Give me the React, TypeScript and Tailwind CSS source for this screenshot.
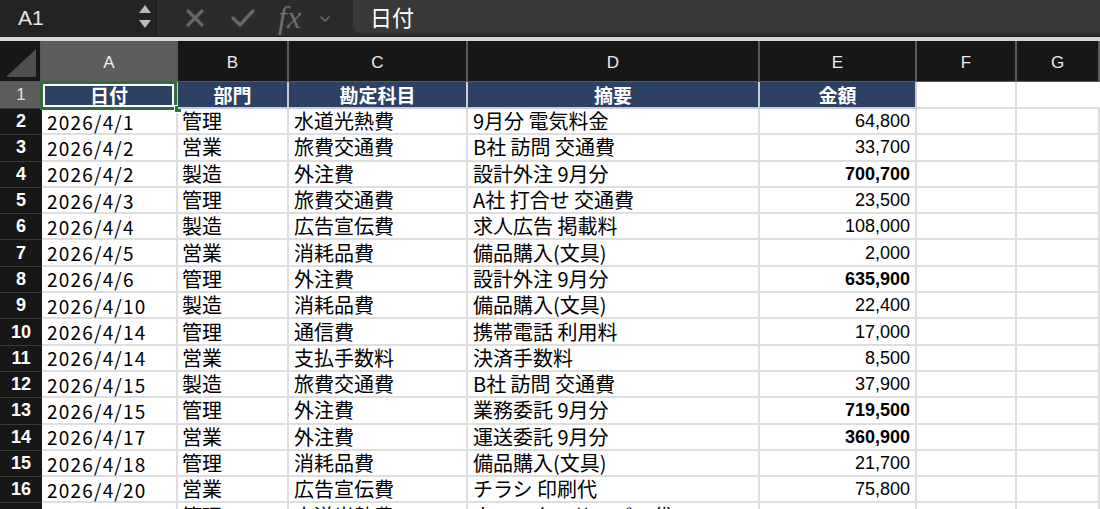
import React from 'react';

type Row = {
  date: string;
  dept: string;
  account: string;
  memo: string;
  amount: string;
  bold?: boolean;
};

const rows: Row[] = [
  { date: '2026/4/1', dept: '管理', account: '水道光熱費', memo: '9月分 電気料金', amount: '64,800' },
  { date: '2026/4/2', dept: '営業', account: '旅費交通費', memo: 'B社 訪問 交通費', amount: '33,700' },
  { date: '2026/4/2', dept: '製造', account: '外注費', memo: '設計外注 9月分', amount: '700,700', bold: true },
  { date: '2026/4/3', dept: '管理', account: '旅費交通費', memo: 'A社 打合せ 交通費', amount: '23,500' },
  { date: '2026/4/4', dept: '製造', account: '広告宣伝費', memo: '求人広告 掲載料', amount: '108,000' },
  { date: '2026/4/5', dept: '営業', account: '消耗品費', memo: '備品購入(文具)', amount: '2,000' },
  { date: '2026/4/6', dept: '管理', account: '外注費', memo: '設計外注 9月分', amount: '635,900', bold: true },
  { date: '2026/4/10', dept: '製造', account: '消耗品費', memo: '備品購入(文具)', amount: '22,400' },
  { date: '2026/4/14', dept: '管理', account: '通信費', memo: '携帯電話 利用料', amount: '17,000' },
  { date: '2026/4/14', dept: '営業', account: '支払手数料', memo: '決済手数料', amount: '8,500' },
  { date: '2026/4/15', dept: '製造', account: '旅費交通費', memo: 'B社 訪問 交通費', amount: '37,900' },
  { date: '2026/4/15', dept: '管理', account: '外注費', memo: '業務委託 9月分', amount: '719,500', bold: true },
  { date: '2026/4/17', dept: '営業', account: '外注費', memo: '運送委託 9月分', amount: '360,900', bold: true },
  { date: '2026/4/18', dept: '管理', account: '消耗品費', memo: '備品購入(文具)', amount: '21,700' },
  { date: '2026/4/20', dept: '営業', account: '広告宣伝費', memo: 'チラシ 印刷代', amount: '75,800' },
  { date: '2026/4/21', dept: '管理', account: '水道光熱費', memo: 'ウォーターサーバー代', amount: '4,800' },
];

const jp = { fontFamily: '"Noto Sans CJK JP", "Noto Sans", sans-serif' };
const sans = { fontFamily: '"Liberation Sans", Arial, sans-serif' };

const gridCols = 'grid grid-cols-[42px_136px_111px_179px_292px_157px_100px_1fr]';

const cell =
  'h-[26.3px] border-r-2 border-b-2 border-[#dedede] bg-white flex items-center whitespace-nowrap text-black leading-none';

function FormulaBar() {
  return (
    <div className="flex h-[36px] bg-[#2b2b2b]">
      <div className="relative flex h-[35px] w-[157px] items-center border-r border-[#1c1c1c] bg-[#232323] pl-[18px]">
        <span className="text-[21px] text-[#e4e4e4]" style={sans}>
          A1
        </span>
        <svg className="absolute right-[4px] top-[4px]" width="14" height="26" viewBox="0 0 14 26">
          <polygon points="7,1 13,9 1,9" fill="#b9b9b9" />
          <polygon points="1,16 13,16 7,24" fill="#b9b9b9" />
        </svg>
      </div>
      <div className="flex w-[196px] items-center">
        <svg className="ml-[28px]" width="20" height="20" viewBox="0 0 20 20">
          <path d="M3 3 L17 17 M17 3 L3 17" stroke="#666" strokeWidth="3.2" strokeLinecap="round" />
        </svg>
        <svg className="ml-[25px]" width="26" height="20" viewBox="0 0 26 20">
          <path d="M3 10 L10 17 L23 3" stroke="#666" strokeWidth="3.4" fill="none" strokeLinecap="round" strokeLinejoin="round" />
        </svg>
        <span
          className="ml-[22px] mb-[3px] text-[32px] italic leading-none text-[#6e6e6e]"
          style={{ fontFamily: '"Liberation Serif", "Times New Roman", serif' }}
        >
          fx
        </span>
        <svg className="ml-[18px] mt-[2px]" width="12" height="8" viewBox="0 0 12 8">
          <path d="M1.5 1.5 L6 6 L10.5 1.5" stroke="#6e6e6e" strokeWidth="1.4" fill="none" />
        </svg>
      </div>
      <div className="flex h-[33px] flex-1 items-center rounded-bl-[8px] bg-[#393939] pl-[17px]">
        <span className="text-[22px] text-white" style={jp}>
          日付
        </span>
      </div>
    </div>
  );
}

function ColumnHeaders() {
  const letters = ['A', 'B', 'C', 'D', 'E', 'F', 'G'];
  return (
    <div className={`${gridCols} h-[41px]`}>
      <div className="relative border-r-2 border-b border-[#5a5a5a] bg-[#171717]">
        <svg className="absolute bottom-[4px] right-[4px]" width="30" height="28" viewBox="0 0 30 28">
          <polygon points="30,0 30,28 0,28" fill="#4e4e4e" />
        </svg>
      </div>
      {letters.map((l, i) => (
        <div
          key={l}
          className={`flex items-center justify-center border-r-2 border-b border-[#5a5a5a] pt-[4px] text-[17px] text-[#ececec] ${
            i === 0 ? 'bg-[#5d5d5d]' : 'bg-[#171717]'
          }`}
          style={sans}
        >
          {l}
        </div>
      ))}
    </div>
  );
}

function HeaderRow() {
  const titles = ['日付', '部門', '勘定科目', '摘要', '金額'];
  return (
    <div className={`${gridCols} h-[27px]`}>
      <div className="flex items-center justify-center border-b border-[#3a3a3a] bg-[#5d5d5d] text-[17px] text-[#e2e2e2]" style={sans}>
        1
      </div>
      {titles.map((t, i) => (
        <div
          key={t}
          className="relative flex items-center justify-center border-r-2 border-b-2 border-[#c9ced6] bg-[#2c4163] text-[19px] font-bold leading-none text-white"
          style={jp}
        >
          {t}
          {i === 0 && (
            <>
              <div className="pointer-events-none absolute -left-[2px] -top-[1px] -right-[1px] -bottom-[3px] border-[3px] border-[#2f6d3b]" />
              <div className="pointer-events-none absolute left-[1px] top-[2px] right-[2px] bottom-[0px] border-2 border-white" />
              <div className="absolute -bottom-[6px] -right-[6px] h-[8px] w-[8px] border border-white bg-[#2f6d3b]" />
            </>
          )}
        </div>
      ))}
      <div className="border-r-2 border-b-2 border-[#dedede] bg-white" />
      <div className="border-b-2 border-[#dedede] bg-white" />
    </div>
  );
}

function DataRow({ row, n }: { row: Row; n: number }) {
  return (
    <div className={gridCols}>
      <div
        className="flex h-[26.3px] items-center justify-center border-b border-[#3a3a3a] bg-[#171717] text-[18px] font-bold text-white"
        style={sans}
      >
        {n}
      </div>
      <div className={`${cell} pl-[5px] text-[19px] tracking-[1.2px]`} style={jp}>
        {row.date}
      </div>
      <div className={`${cell} pl-[4px] text-[20px]`} style={jp}>
        {row.dept}
      </div>
      <div className={`${cell} pl-[5px] text-[20px]`} style={jp}>
        {row.account}
      </div>
      <div className={`${cell} pl-[5px] text-[20px]`} style={jp}>
        {row.memo}
      </div>
      <div
        className={`${cell} justify-end pr-[5px] text-[18px] ${row.bold ? 'font-bold' : ''}`}
        style={sans}
      >
        {row.amount}
      </div>
      <div className={cell} />
      <div className={`${cell} border-r-0`} />
    </div>
  );
}

export default function App() {
  return (
    <div className="h-[509px] w-[1100px] overflow-hidden bg-white">
      <FormulaBar />
      <div className="h-[1px] bg-[#1c1c1c]" />
      <div className="h-[4px] bg-[#d6d6d6]" />
      <ColumnHeaders />
      <HeaderRow />
      {rows.map((r, i) => (
        <DataRow key={i} row={r} n={i + 2} />
      ))}
    </div>
  );
}
